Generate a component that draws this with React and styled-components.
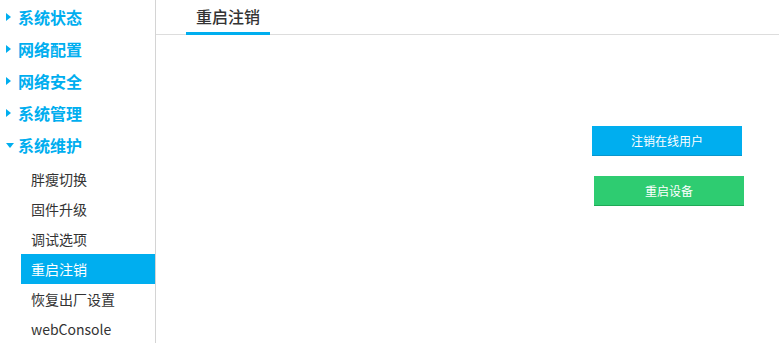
import styled, { createGlobalStyle } from "styled-components";

const GlobalStyle = createGlobalStyle`
    html, body {
        margin: 0;
        padding: 0;
        background: #FFFFFF;
        font-family: "Noto Sans CJK SC", "Noto Sans", sans-serif;
    }
`;

const menu = [
    { label: "系统状态" },
    { label: "网络配置" },
    { label: "网络安全" },
    { label: "系统管理" },
    {
        label: "系统维护",
        open: true,
        children: ["胖瘦切换", "固件升级", "调试选项", "重启注销", "恢复出厂设置", "webConsole"],
    },
];

export default function App() {
    return (
        <Page>
            <GlobalStyle />
            <Sidebar>
                {menu.map((group) => (
                    <div key={group.label}>
                        <GroupTitle>
                            <Arrow $open={group.open} />
                            {group.label}
                        </GroupTitle>
                        {group.children && (
                            <SubList>
                                {group.children.map((item) => (
                                    <SubItem key={item} $active={item === "重启注销"}>
                                        {item}
                                    </SubItem>
                                ))}
                            </SubList>
                        )}
                    </div>
                ))}
            </Sidebar>
            <Main>
                <TabBar>
                    <Tab>重启注销</Tab>
                </TabBar>
                <Actions>
                    <ActionButton $color="#00AEEF" $shade="#0A96CC">注销在线用户</ActionButton>
                    <ActionButton $color="#2ECC71" $shade="#1FA956" $shift>重启设备</ActionButton>
                </Actions>
            </Main>
        </Page>
    );
}

const Page = styled.div`
    width: 779px;
    height: 343px;
    display: flex;
    overflow: hidden;
`;

const Sidebar = styled.div`
    width: 155px;
    flex-shrink: 0;
    border-right: 1px solid #D4D4D4;
    padding-top: 1px;
`;

const GroupTitle = styled.div`
    height: 32px;
    display: flex;
    align-items: center;
    padding-left: 6px;
    font-size: 16px;
    font-weight: 700;
    color: #00AEEF;
`;

const Arrow = styled.span`
    width: 0;
    height: 0;
    ${(p) =>
        p.$open
            ? `
        border-left: 4px solid transparent;
        border-right: 4px solid transparent;
        border-top: 5px solid #00AEEF;
        margin-right: 4px;
    `
            : `
        border-top: 4px solid transparent;
        border-bottom: 4px solid transparent;
        border-left: 5px solid #00AEEF;
        margin-right: 7px;
    `}
`;

const SubList = styled.div`
    padding-top: 3px;
    padding-left: 21px;
`;

const SubItem = styled.div`
    height: 30px;
    display: flex;
    align-items: center;
    padding-left: 10px;
    font-size: 14px;
    color: ${(p) => (p.$active ? "#FFFFFF" : "#333333")};
    background: ${(p) => (p.$active ? "#00AEEF" : "transparent")};
`;

const Main = styled.div`
    flex: 1;
    display: flex;
    flex-direction: column;
`;

const TabBar = styled.div`
    height: 34px;
    padding-left: 30px;
    border-bottom: 1px solid #DDDDDD;
    display: flex;
`;

const Tab = styled.div`
    width: 74px;
    height: 32px;
    padding-left: 10px;
    border-bottom: 3px solid #00AEEF;
    margin-bottom: -1px;
    display: flex;
    align-items: center;
    font-size: 16px;
    font-weight: 500;
    color: #333333;
`;

const Actions = styled.div`
    display: flex;
    flex-direction: column;
    align-items: flex-end;
    gap: 20px;
    padding-top: 91px;
    padding-right: 37px;
`;

const ActionButton = styled.div`
    width: 150px;
    height: 29px;
    border-bottom: 1px solid ${(p) => p.$shade};
    background: ${(p) => p.$color};
    color: #FFFFFF;
    font-size: 12px;
    display: flex;
    align-items: center;
    justify-content: center;
    margin-right: ${(p) => (p.$shift ? "-2px" : "0")};
    cursor: pointer;
`;
